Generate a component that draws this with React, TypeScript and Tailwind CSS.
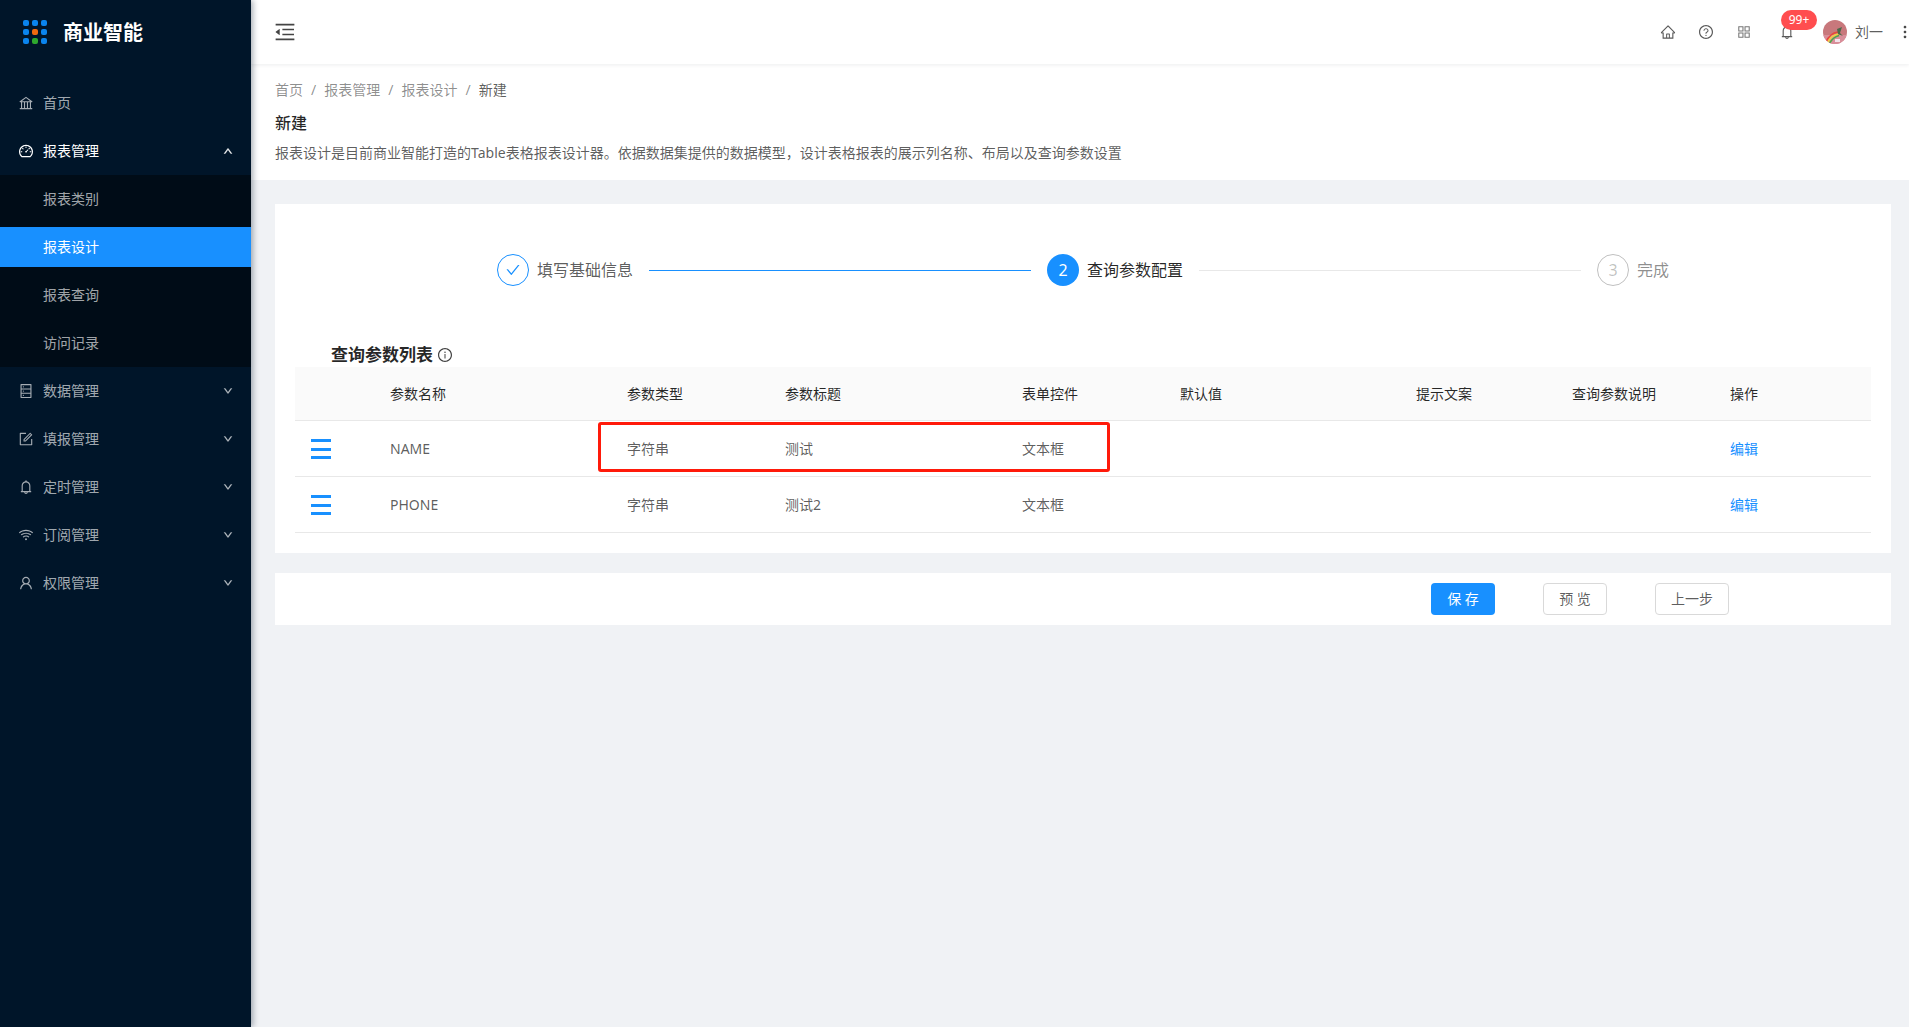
import React from "react";
import {
  AiOutlineBank, AiOutlineDashboard, AiOutlineDatabase, AiOutlineForm, AiOutlineBell, AiOutlineWifi,
  AiOutlineUser, AiOutlineHome, AiOutlineQuestionCircle, AiOutlineAppstore, AiOutlineMenuFold,
  AiOutlineCheck, AiOutlineInfoCircle, AiOutlineMore, AiOutlineUp, AiOutlineDown,
} from "react-icons/ai";

const menuTop = [{ icon: AiOutlineBank, label: "首页" }];
const subItems = ["报表类别", "报表设计", "报表查询", "访问记录"];
const menuBottom = [
  { icon: AiOutlineDatabase, label: "数据管理" },
  { icon: AiOutlineForm, label: "填报管理" },
  { icon: AiOutlineBell, label: "定时管理" },
  { icon: AiOutlineWifi, label: "订阅管理" },
  { icon: AiOutlineUser, label: "权限管理" },
];
const columns = ["", "参数名称", "参数类型", "参数标题", "表单控件", "默认值", "提示文案", "查询参数说明", "操作"];
const rows = [
  ["NAME", "字符串", "测试", "文本框"],
  ["PHONE", "字符串", "测试2", "文本框"],
];

function Logo() {
  const colors = ["#0a84ee", "#0a84ee", "#0a84ee", "#0a84ee", "#f0690f", "#0a84ee", "#0a84ee", "#2ea82e", "#0a84ee"];
  return (
    <div className="grid grid-cols-3 gap-[3px] w-6 h-6">
      {colors.map((c, i) => (
        <span key={i} className="w-[6px] h-[6px] rounded-[2px]" style={{ backgroundColor: c }} />
      ))}
    </div>
  );
}

function Avatar() {
  return (
    <svg width="24" height="24" viewBox="0 0 24 24" className="rounded-full">
      <rect width="24" height="24" fill="#c8787c" />
      <rect y="15" width="24" height="9" fill="#d98e9a" />
      <path d="M3 22 Q7 13 15 12" stroke="#e8463c" strokeWidth="1.6" fill="none" />
      <path d="M4.5 23 Q8 15 15.5 14" stroke="#f2d33c" strokeWidth="1.6" fill="none" />
      <path d="M6 24 Q10 17 16 15.5" stroke="#4aa84a" strokeWidth="1.6" fill="none" />
      <path d="M14 9 L19 7 L17 13 L20 16 L15 14 Z" fill="#4c6b4a" />
      <rect x="12" y="19" width="5" height="3" fill="#f3e2ea" />
    </svg>
  );
}

function DragHandle() {
  return (
    <div className="flex flex-col gap-[5.5px] w-5 ml-4 mt-[2px]">
      <span className="h-[3px] bg-[#1890ff]" />
      <span className="h-[3px] bg-[#1890ff]" />
      <span className="h-[3px] bg-[#1890ff]" />
    </div>
  );
}

export default function App() {
  return (
    <div className="flex h-screen overflow-hidden bg-[#f0f2f5] text-sm font-['Noto_Sans','Noto_Sans_CJK_SC',sans-serif]">
      <aside className="w-[251px] shrink-0 bg-[#001529] text-[rgba(255,255,255,0.65)] shadow-[2px_0_6px_rgba(0,21,41,0.35)] z-10">
        <div className="h-[64px] flex items-center pl-[23px] gap-4">
          <Logo />
          <span className="text-[20px] font-bold text-white relative top-[1px]">商业智能</span>
        </div>
        <nav className="pt-[15px] flex flex-col">
          {menuTop.map((m) => (
            <div key={m.label} className="h-10 my-1 flex items-center pl-[18px] gap-[9px]">
              <m.icon className="text-[16px]" />
              <span>{m.label}</span>
            </div>
          ))}
          <div className="h-10 my-1 flex items-center pl-[18px] gap-[9px] text-white">
            <AiOutlineDashboard className="text-[16px]" />
            <span className="flex-1">报表管理</span>
            <AiOutlineUp className="text-[10px] mr-[18px] stroke-[60]" />
          </div>
          <div className="bg-[#000c17] flex flex-col">
            {subItems.map((s, i) => (
              <div
                key={s}
                className={
                  i === 1
                    ? "h-10 my-1 flex items-center pl-[43px] bg-[#1890ff] text-white"
                    : "h-10 my-1 flex items-center pl-[43px]"
                }
              >
                {s}
              </div>
            ))}
          </div>
          {menuBottom.map((m) => (
            <div key={m.label} className="h-10 my-1 flex items-center pl-[18px] gap-[9px]">
              <m.icon className="text-[16px]" />
              <span className="flex-1">{m.label}</span>
              <AiOutlineDown className="text-[10px] mr-[18px] stroke-[60]" />
            </div>
          ))}
        </nav>
      </aside>

      <div className="flex-1 min-w-0 flex flex-col">
        <header className="h-[64px] shrink-0 bg-white flex items-center shadow-[0_1px_4px_rgba(0,21,41,0.08)] z-[5] relative">
          <AiOutlineMenuFold className="ml-[22px] text-[24px] text-[#444]" />
          <div className="ml-auto flex items-center text-[rgba(0,0,0,0.65)]">
            <AiOutlineHome className="text-[16px]" />
            <AiOutlineQuestionCircle className="text-[16px] ml-[22px]" />
            <AiOutlineAppstore className="text-[16px] ml-[22px] text-[#777]" />
            <div className="relative ml-[27px] mr-[28px]">
              <AiOutlineBell className="text-[16px]" />
              <span className="absolute left-[2px] top-[-14px] w-[36px] h-5 rounded-[10px] bg-[#ff4d4f] text-white text-xs leading-5 text-center">
                99+
              </span>
            </div>
            <Avatar />
            <span className="ml-[8px] w-[28px]">刘一</span>
            <AiOutlineMore className="text-[18px] ml-[13px] mr-[-5px] text-[#333] stroke-[40]" />
          </div>
        </header>

        <section className="bg-white h-[116px] pl-[24px] pt-[15px] shrink-0">
          <div className="h-[22px] leading-[22px] text-[rgba(0,0,0,0.45)] flex gap-2">
            <span>首页</span><span>/</span>
            <span>报表管理</span><span>/</span>
            <span>报表设计</span><span>/</span>
            <span className="text-[rgba(0,0,0,0.65)]">新建</span>
          </div>
          <h1 className="mt-[10px] h-6 leading-6 text-base font-medium text-[rgba(0,0,0,0.85)]">新建</h1>
          <p className="mt-[7px] h-[22px] leading-[22px] text-[rgba(0,0,0,0.65)]">
            报表设计是目前商业智能打造的Table表格报表设计器。依据数据集提供的数据模型，设计表格报表的展示列名称、布局以及查询参数设置
          </p>
        </section>

        <main className="ml-[24px] mr-[18px] mt-6">
          <div className="bg-white px-5 pt-[50px] pb-5">
            <div className="w-[1172px] mx-auto flex items-center">
              <div className="flex-1 flex items-center gap-2">
                <span className="w-8 h-8 shrink-0 rounded-full border border-[#1890ff] text-[#1890ff] flex items-center justify-center">
                  <AiOutlineCheck className="text-[16px]" />
                </span>
                <span className="text-base text-[rgba(0,0,0,0.65)]">填写基础信息</span>
                <span className="flex-1 h-px bg-[#1890ff] ml-2 mr-4" />
              </div>
              <div className="flex-1 flex items-center gap-2">
                <span className="w-8 h-8 shrink-0 rounded-full bg-[#1890ff] text-white text-base flex items-center justify-center">2</span>
                <span className="text-base text-[rgba(0,0,0,0.85)]">查询参数配置</span>
                <span className="flex-1 h-px bg-[#e8e8e8] ml-2 mr-4" />
              </div>
              <div className="flex items-center gap-2">
                <span className="w-8 h-8 shrink-0 rounded-full border border-[rgba(0,0,0,0.25)] text-[rgba(0,0,0,0.25)] text-base flex items-center justify-center">3</span>
                <span className="text-base text-[rgba(0,0,0,0.45)]">完成</span>
              </div>
            </div>

            <div className="mt-[57px] h-6 pl-9 flex items-center gap-[4px]">
              <span className="text-[17px] font-bold text-[rgba(0,0,0,0.85)]">查询参数列表</span>
              <AiOutlineInfoCircle className="text-[16px] text-[rgba(0,0,0,0.75)]" />
            </div>

            <div className="relative">
              <table className="w-full table-fixed border-collapse">
                <colgroup>
                  <col className="w-[79px]" />
                  <col className="w-[237px]" />
                  <col className="w-[158px]" />
                  <col className="w-[237px]" />
                  <col className="w-[158px]" />
                  <col className="w-[236px]" />
                  <col className="w-[156px]" />
                  <col className="w-[158px]" />
                  <col className="w-[157px]" />
                </colgroup>
                <thead>
                  <tr className="h-[53px] bg-[#fafafa] border-b border-[#e8e8e8]">
                    {columns.map((c, i) => (
                      <th key={i} className="px-4 pt-[1px] text-left font-normal text-[rgba(0,0,0,0.85)]">{c}</th>
                    ))}
                  </tr>
                </thead>
                <tbody>
                  {rows.map((r) => (
                    <tr key={r[0]} className="h-[56px] border-b border-[#e8e8e8] text-[rgba(0,0,0,0.65)]">
                      <td className="p-0"><DragHandle /></td>
                      {r.map((v, i) => (
                        <td key={i} className="px-4 pt-[1px]">{v}</td>
                      ))}
                      <td /><td /><td />
                      <td className="px-4 pt-[1px] text-[#1890ff]">编辑</td>
                    </tr>
                  ))}
                </tbody>
              </table>
              <div className="absolute left-[303px] top-[55px] w-[512px] h-[50px] border-[3px] border-[#ff1a0a] rounded-[3px]" />
            </div>
          </div>

          <div className="mt-5 h-[52px] bg-white flex items-center justify-end pr-[162px]">
            <button className="w-16 h-8 rounded-[4px] bg-[#1890ff] text-white">保 存</button>
            <button className="w-16 h-8 ml-12 rounded-[4px] border border-[#d9d9d9] text-[rgba(0,0,0,0.65)]">预 览</button>
            <button className="w-[74px] h-8 ml-12 rounded-[4px] border border-[#d9d9d9] text-[rgba(0,0,0,0.65)]">上一步</button>
          </div>
        </main>
      </div>
    </div>
  );
}
